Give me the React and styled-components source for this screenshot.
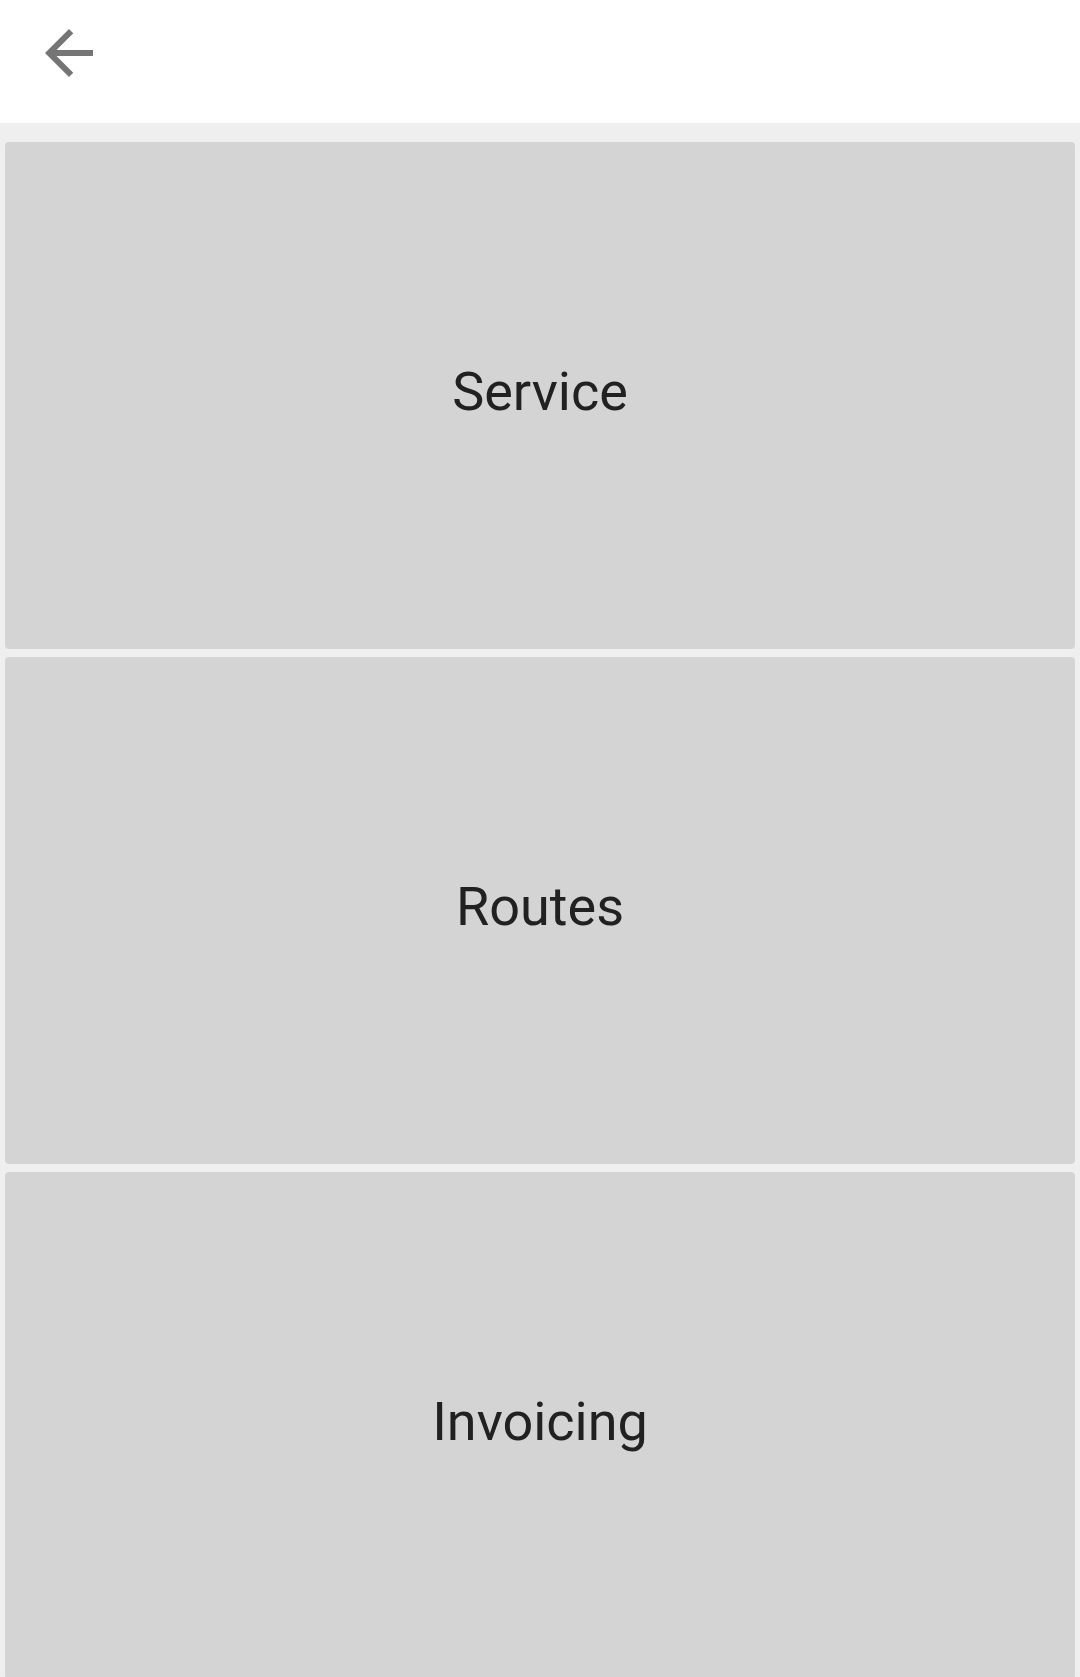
import React from "react";
import styled, { createGlobalStyle } from "styled-components";

const GlobalStyle = createGlobalStyle`
  html, body {
    margin: 0;
    padding: 0;
    background: #efefef;
    font-family: Roboto, "Noto Sans", sans-serif;
  }
`;

const Page = styled.div`
  min-height: 1677px;
  background: #efefef;
  overflow: hidden;
`;

const Header = styled.header`
  height: 123px;
  background: #ffffff;
  display: flex;
  align-items: flex-start;
  padding: 17px 0 0 33px;
  box-sizing: border-box;
`;

const BackButton = styled.button`
  background: none;
  border: none;
  padding: 0;
  width: 72px;
  height: 72px;
  cursor: pointer;
  color: #757575;

  svg {
    display: block;
  }
`;

const List = styled.div`
  display: flex;
  flex-direction: column;
  gap: 8px;
  padding: 19px 5px 0;
`;

const Tile = styled.div`
  height: 507px;
  flex-shrink: 0;
  background: #d4d4d4;
  border-radius: 4px;
  display: flex;
  align-items: center;
  justify-content: center;
  font-size: 54px;
  color: #212121;
  padding-bottom: 8px;
  box-sizing: border-box;
`;

const items = ["Service", "Routes", "Invoicing"];

export default function App() {
  return (
    <>
      <GlobalStyle />
      <Page>
        <Header>
          <BackButton aria-label="Back">
            <svg width="72" height="72" viewBox="0 0 24 24" fill="currentColor">
              <path d="M20 11H7.83l5.59-5.59L12 4l-8 8 8 8 1.41-1.41L7.83 13H20v-2z" />
            </svg>
          </BackButton>
        </Header>
        <List>
          {items.map((label) => (
            <Tile key={label}>{label}</Tile>
          ))}
        </List>
      </Page>
    </>
  );
}
